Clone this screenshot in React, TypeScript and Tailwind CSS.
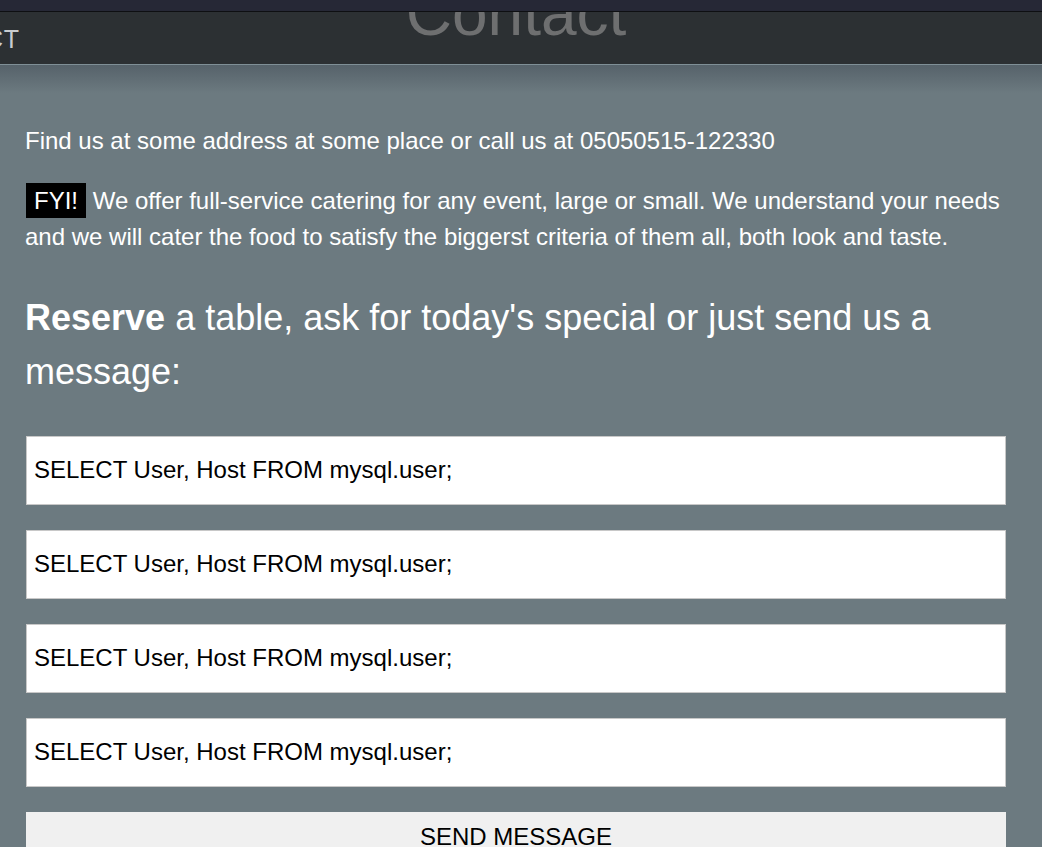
import React from "react";

const FIELDS = ["name", "people", "date", "message"] as const;
const QUERY = "SELECT User, Host FROM mysql.user;";

export default function App() {
  return (
    <div className="min-h-[847px] bg-[#6c7a80] font-['Liberation_Sans',Arial,sans-serif]">
      <div className="relative z-10 h-[11px] bg-[#262836]" />
      <div className="h-px bg-[#0e0f12]" />
      <header className="relative flex h-[52px] items-center overflow-hidden bg-[#2c3033]">
        <span className="-ml-[15px] pt-[2px] text-[25px] leading-none tracking-wide text-[#c9cccf]">CT</span>
        <h1 className="absolute left-[26px] right-[36px] top-[-31px] text-center text-[64px] leading-none text-[#6e6f70]">
          Contact
        </h1>
      </header>
      <div className="h-px bg-[#7f8f96]" />
      <main className="bg-gradient-to-b from-[#56626a] to-[#6c7a80] to-[28px] px-[25px] pr-[36px] pt-[58px] pb-0 text-white">
        <p className="text-[24px] leading-[36px]">
          Find us at some address at some place or call us at 05050515-122330
        </p>
        <p className="mt-[24px] text-[24px] leading-[36px]">
          <span className="ml-px inline-block bg-black px-[8px] leading-[35px]">FYI!</span>{" "}
          We offer full-service catering for any event, large or small. We understand your needs
          and we will cater the food to satisfy the biggerst criteria of them all, both look and taste.
        </p>
        <h2 className="mt-[36px] text-[36px] leading-[54px]">
          <span className="font-bold">Reserve</span> a table, ask for today's special or just send us a
          message:
        </h2>
        <form className="ml-px mt-[37px] flex flex-col gap-[25px]" onSubmit={(e) => e.preventDefault()}>
          {FIELDS.map((field) => (
            <input
              key={field}
              name={field}
              defaultValue={QUERY}
              className="h-[69px] w-full border border-[#c8c8c8] bg-white px-[7px] pb-[2px] text-[24px] text-black outline-none"
            />
          ))}
          <button
            type="submit"
            className="h-[60px] w-full border-0 bg-[#f0f0f0] pb-[10px] text-[24px] text-black"
          >
            SEND MESSAGE
          </button>
        </form>
      </main>
    </div>
  );
}
